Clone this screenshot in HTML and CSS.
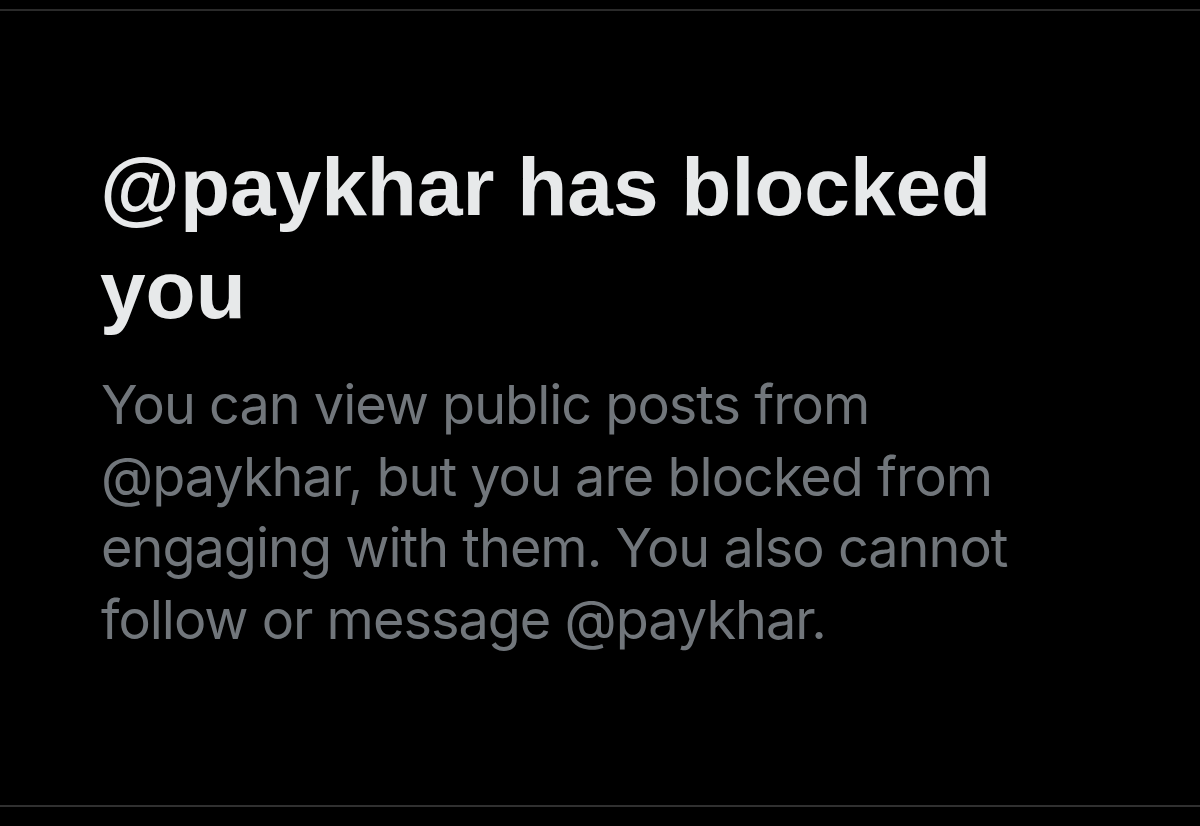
FILE: index.html
```html
<!DOCTYPE html>
<html lang="en">
<head>
<meta charset="utf-8">
<title>Blocked</title>
<link rel="stylesheet" href="styles.css">
</head>
<body>
<main class="screen">
  <section class="panel">
    <div class="content">
      <h1 class="title">@paykhar has blocked you</h1>
      <p class="desc">You can view public posts from @paykhar, but you are blocked from engaging with them. You also cannot follow or message @paykhar.</p>
    </div>
  </section>
</main>
</body>
</html>
```
FILE: styles.css
```css
html, body {
  margin: 0;
  padding: 0;
  background: #000;
}
.screen {
  width: 1200px;
  height: 826px;
  padding-top: 9px;
  box-sizing: border-box;
  overflow: hidden;
}
.panel {
  height: 798px;
  box-sizing: border-box;
  border-top: 2px solid #2a2a2a;
  border-bottom: 2px solid #303030;
}
.content {
  padding: 124px 0 0 100px;
  width: 960px;
}
.title {
  margin: 0;
  font-family: "Liberation Sans", Arial, sans-serif;
  font-weight: 700;
  font-size: 82px;
  line-height: 103px;
  color: #e7e9ea;
}
.desc {
  margin: 28px 0 0 1px;
  font-family: Inter, "Noto Sans", sans-serif;
  font-weight: 400;
  font-size: 54px;
  letter-spacing: -1px;
  line-height: 71.7px;
  color: #71767b;
}
```
